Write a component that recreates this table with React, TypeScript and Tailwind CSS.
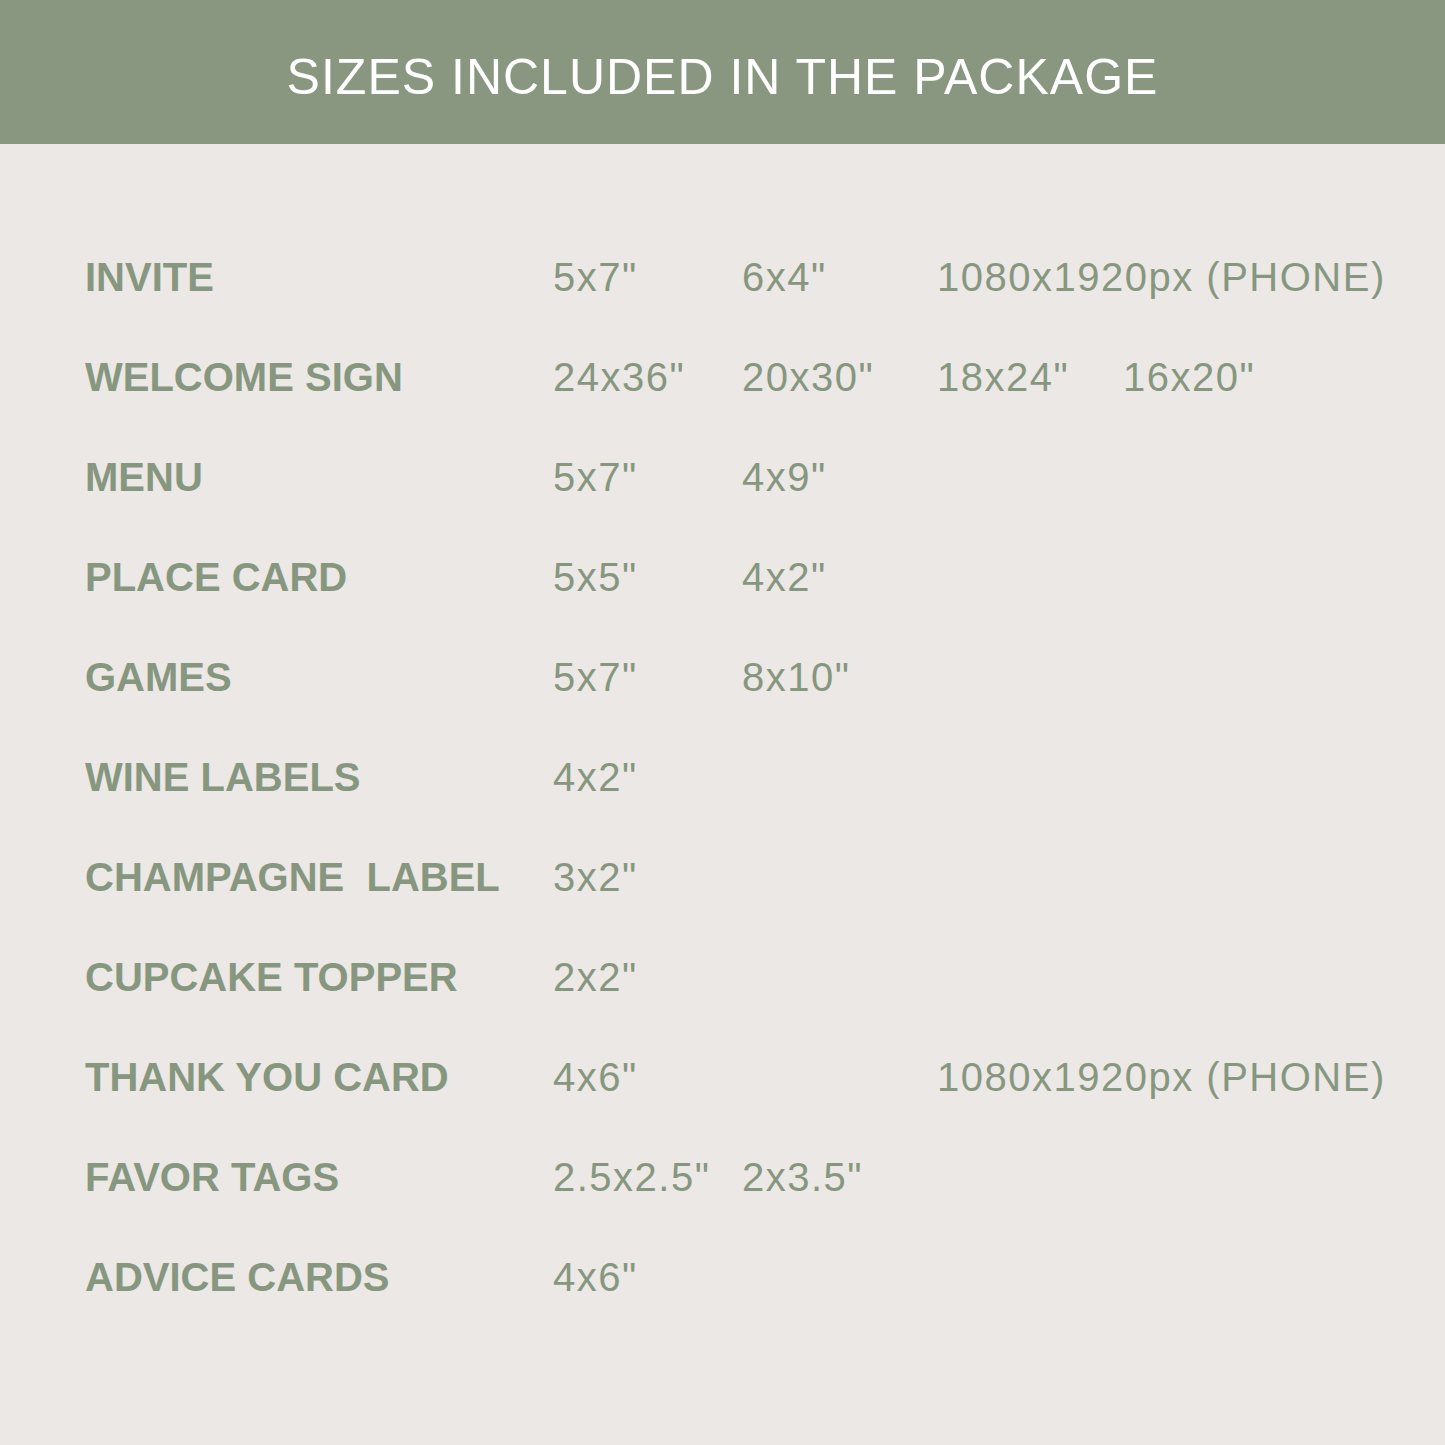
const rows: { label: string; sizes: string[] }[] = [
  { label: 'INVITE', sizes: ['5x7"', '6x4"', '1080x1920px (PHONE)'] },
  { label: 'WELCOME SIGN', sizes: ['24x36"', '20x30"', '18x24"', '16x20"'] },
  { label: 'MENU', sizes: ['5x7"', '4x9"'] },
  { label: 'PLACE CARD', sizes: ['5x5"', '4x2"'] },
  { label: 'GAMES', sizes: ['5x7"', '8x10"'] },
  { label: 'WINE LABELS', sizes: ['4x2"'] },
  { label: 'CHAMPAGNE  LABEL', sizes: ['3x2"'] },
  { label: 'CUPCAKE TOPPER', sizes: ['2x2"'] },
  { label: 'THANK YOU CARD', sizes: ['4x6"', '', '1080x1920px (PHONE)'] },
  { label: 'FAVOR TAGS', sizes: ['2.5x2.5"', '2x3.5"'] },
  { label: 'ADVICE CARDS', sizes: ['4x6"'] },
]

export default function App() {
  return (
    <div className="w-[1445px] h-[1445px] bg-[#ebe8e5] font-['Liberation_Sans',Arial,sans-serif] overflow-hidden">
      <div className="h-[144px] bg-[#899780] flex items-center justify-center pt-[10px]">
        <h1 className="text-white text-[50px] font-normal tracking-[1px] leading-none">
          SIZES INCLUDED IN THE PACKAGE
        </h1>
      </div>
      <div className="pl-[85px] pt-[83px]">
        {rows.map(row => (
          <div
            key={row.label}
            className="grid grid-cols-[468px_189px_195px_186px_auto] h-[100px] items-center text-[#87977f] text-[40px] leading-[100px]"
          >
            <span className="font-bold whitespace-pre">{row.label}</span>
            {[0, 1, 2, 3].map(i => (
              <span key={i} className="tracking-[1.5px] whitespace-nowrap">
                {row.sizes[i] ?? ''}
              </span>
            ))}
          </div>
        ))}
      </div>
    </div>
  )
}
